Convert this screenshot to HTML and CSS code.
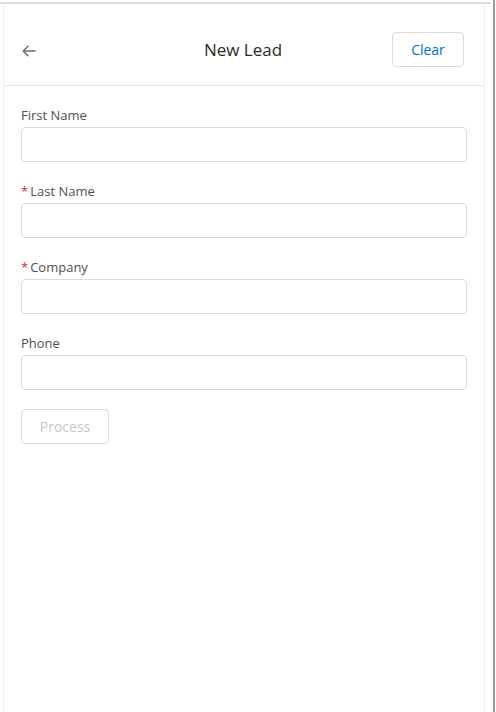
FILE: index.html
```html
<!DOCTYPE html>
<html lang="en">
<head>
  <meta charset="UTF-8" />
  <meta name="viewport" content="width=device-width, initial-scale=1.0"/>
  <title>New Lead</title>
  <link rel="stylesheet" href="styles.css">
</head>
<body>

  <div class="frame">
    <div class="card">
      <div class="header">
        <button class="back" aria-label="Back">
          <svg width="14" height="12" viewBox="0 0 14 12" fill="none" stroke="#706e6b" stroke-width="1.5" stroke-linecap="round" stroke-linejoin="round">
            <path d="M13 6H1.5M6 1.2L1.2 6l4.8 4.8"/>
          </svg>
        </button>
        <h1>New Lead</h1>
        <button class="clear">Clear</button>
      </div>

      <div class="form">
        <div class="field">
          <label for="first">First Name</label>
          <input type="text" id="first" />
        </div>
        <div class="field">
          <label for="last"><abbr>*</abbr>Last Name</label>
          <input type="text" id="last" />
        </div>
        <div class="field">
          <label for="company"><abbr>*</abbr>Company</label>
          <input type="text" id="company" />
        </div>
        <div class="field">
          <label for="phone">Phone</label>
          <input type="tel" id="phone" />
        </div>
        <button class="process" disabled>Process</button>
      </div>
    </div>
  </div>
  <div class="edge"></div>

</body>
</html>
```

FILE: styles.css
```css
* {
  box-sizing: border-box;
}

body {
  margin: 0;
  font-family: 'Open Sans', sans-serif;
  background: #fff;
  color: #3e3e3c;
  display: flex;
  height: 712px;
  overflow: hidden;
}

.frame {
  width: 493px;
  padding-top: 2px;
  display: flex;
  flex-direction: column;
}

.card {
  border-top: 2px solid #dcdcdc;
  margin-right: 2px;
  flex: 1;
  display: flex;
  flex-direction: column;
}

.card > * {
  margin-left: 3px;
  margin-right: 6px;
  border-left: 1px solid #f0f0f0;
  border-right: 1px solid #f0f0f0;
}

.header {
  display: flex;
  align-items: center;
  justify-content: space-between;
  padding: 28px 20px 18px 18px;
  border-bottom: 1px solid #e5e5e5;
}

.back {
  background: none;
  border: none;
  padding: 0;
  width: 72px;
  text-align: left;
  display: flex;
  margin-top: 2px;
}

.header h1 {
  margin: 0;
  font-size: 17px;
  font-weight: 400;
  color: #2b2826;
}

.clear {
  width: 72px;
  height: 35px;
  border: 1px solid #dddbda;
  border-radius: 4px;
  background: #fff;
  color: #0070d2;
  font-family: inherit;
  font-size: 14px;
}

.form {
  padding: 19px 17px 0 17px;
  flex: 1;
}

.field {
  margin-bottom: 19px;
}

.field label {
  display: block;
  font-size: 13px;
  line-height: 20px;
  margin-bottom: 2px;
  color: #514f4d;
}

.field abbr {
  color: #c23934;
  margin-right: 2px;
  text-decoration: none;
}

.field input {
  display: block;
  width: 100%;
  height: 35px;
  border: 1px solid #dddbda;
  border-radius: 4px;
  background: #fff;
}

.process {
  width: 88px;
  height: 35px;
  border: 1px solid #dddbda;
  border-radius: 4px;
  background: #fff;
  color: #c9c7c5;
  font-family: inherit;
  font-size: 14px;
}

.edge {
  width: 2px;
  background: #9a9a9a;
}
```
